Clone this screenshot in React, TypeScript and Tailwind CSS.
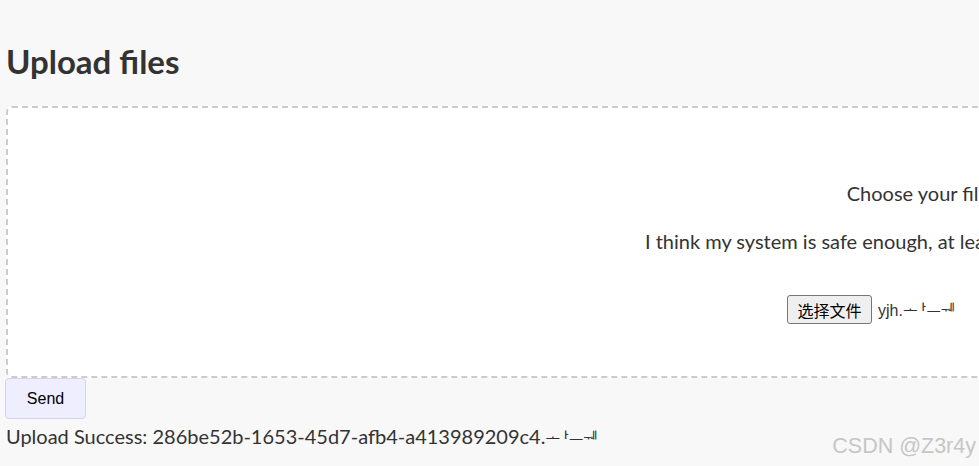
import React from 'react'

const sans = { fontFamily: 'Lato, "Noto Sans", sans-serif' }
const kr = { fontFamily: '"Noto Sans CJK KR", sans-serif' }

// garbled filename tail, each jamo kept on its own so they don't get composed
function Garbled() {
  return (
    <span className="text-[16px]" style={kr}>
      <span className="inline-block">ᅩ</span>
      <span className="inline-block ml-[-6px]">ᅡ</span>
      <span className="inline-block">—</span>
      <span className="inline-block">ᅰ</span>
    </span>
  )
}

export default function App() {
  return (
    <div
      className="w-[979px] h-[466px] overflow-hidden bg-[#f8f8f8] text-[#333333] relative"
      style={sans}
    >
      <div className="w-[2000px] pl-[5px]">
        {/* Title */}
        <h1 className="pt-[41px] pl-px text-[33px] leading-[40px] font-bold text-[#333333]">
          Upload files
        </h1>

        {/* Drop zone */}
        <div className="mt-[25px] ml-px w-[1912px] h-[272px] bg-white border-2 border-dashed border-[#cccccc] rounded-[6px] flex flex-col items-center pt-[71px]">
          <p className="text-[20px] leading-[28px]">Choose your file to upload</p>
          <p className="mt-[20px] text-[20px] leading-[28px]">
            I think my system is safe enough, at least I think so. Can you hack into it?
          </p>
          <div className="mt-[40px] flex items-center gap-[6px] w-[350px]">
            <span
              className="h-[29px] px-[9.5px] flex items-center bg-[#efefef] border border-[#767676] rounded-[3px] text-[16px] text-black"
              style={{ fontFamily: '"Noto Sans CJK SC", sans-serif' }}
            >
              选择文件
            </span>
            <span
              className="text-[16px] text-[#333333]"
              style={{ fontFamily: '"Liberation Sans", Arial, sans-serif' }}
            >
              yjh.<Garbled />
            </span>
          </div>
        </div>

        {/* Send */}
        <button
          className="w-[81px] h-[41px] bg-[#eeeeff] border border-[#d4d4ee] rounded-[4px] text-[16px] text-black"
          style={{ fontFamily: '"Liberation Sans", Arial, sans-serif' }}
        >
          Send
        </button>

        <p className="pl-px mt-[3px] text-[20px] leading-[28px]">
          Upload Success: 286be52b-1653-45d7-afb4-a413989209c4.
          <Garbled />
        </p>
      </div>

      {/* watermark */}
      <span
        className="absolute right-[3px] bottom-[4px] text-[21.5px] text-[#c6c6c6]"
        style={{ fontFamily: '"Liberation Sans", Arial, sans-serif' }}
      >
        CSDN @Z3r4y
      </span>
    </div>
  )
}
